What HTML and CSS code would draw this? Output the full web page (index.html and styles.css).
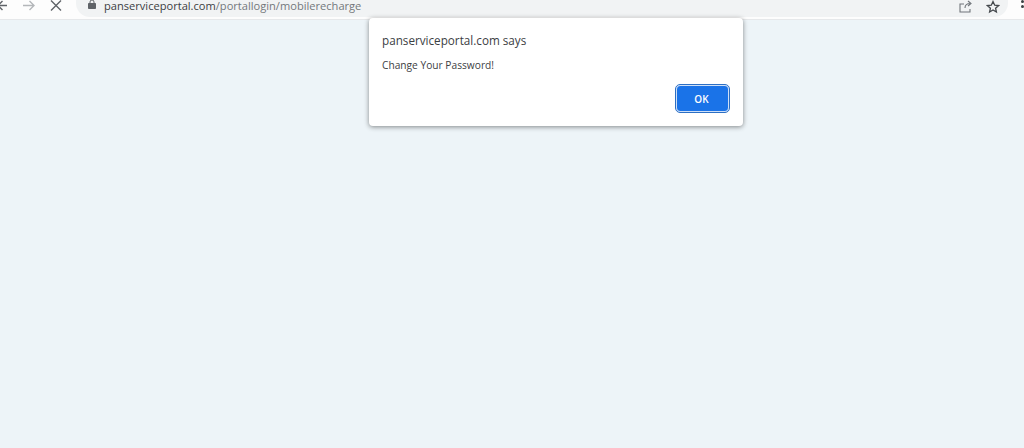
FILE: index.html
```html
<!DOCTYPE html>
<html lang="en">
<head>
  <meta charset="UTF-8" />
  <title>panserviceportal.com</title>
  <link rel="stylesheet" href="styles.css">
</head>
<body>

<div class="toolbar">
  <div class="nav">
    <svg class="icon back" width="14" height="14" viewBox="0 0 14 14"><path d="M10 5.500H1M5.500 1L1 5.500 5.500 10" /></svg>
    <svg class="icon forward" width="14" height="14" viewBox="0 0 14 14"><path d="M1 5.500h11M7.500 1L12 5.500 7.500 10" /></svg>
    <svg class="icon stop" width="14" height="14" viewBox="0 0 14 14"><path d="M2 0.500l10 10M12 0.500l-10 10" /></svg>
  </div>
  <div class="omnibox">
    <svg class="lock" width="10" height="11" viewBox="0 0 10 11"><path d="M1.500 3.500h7v5h-7z" /><path class="shackle" d="M3 3.500V2a2 2 0 0 1 4 0v1.500" /></svg>
    <span class="url"><span class="host">panserviceportal.com</span>/portallogin/mobilerecharge</span>
    <div class="actions">
      <svg class="icon share" width="16" height="14" viewBox="0 0 16 14"><path d="M6 4H2v8h10V9M7 8c0-3 2-4.500 5-4.500M10 1l3 2.500L10 6" /></svg>
      <svg class="icon star" width="14" height="14" viewBox="0 0 14 14"><path d="M7 1.500l1.700 3.700 3.800.4-2.900 2.600.8 3.800L7 10l-3.400 2 .8-3.800L1.500 5.600l3.800-.4z" /></svg>
    </div>
  </div>
  <div class="menu">
    <span class="menu-dot"></span>
    <span class="menu-dot"></span>
  </div>
</div>

<div class="page"></div>

<div class="dialog">
  <div class="dialog-title">panserviceportal.com says</div>
  <div class="dialog-text">Change Your Password!</div>
  <div class="dialog-buttons">
    <button class="ok-btn">OK</button>
  </div>
</div>

</body>
</html>
```

FILE: styles.css
```css
* { box-sizing: border-box; }

html, body {
  height: 100%;
}

body {
  margin: 0;
  font-family: "Open Sans", "Noto Sans", sans-serif;
  background: #edf4f8;
  display: flex;
  flex-direction: column;
  overflow: hidden;
}

.toolbar {
  height: 20px;
  flex: none;
  background: #fdfdfd;
  border-bottom: 1px solid #e6e8ea;
  display: flex;
  align-items: flex-start;
  overflow: hidden;
}

.nav {
  width: 79px;
  flex: none;
  display: flex;
  gap: 11px;
  margin-left: -3px;
}

.icon {
  flex: none;
  fill: none;
  stroke: #5f6368;
  stroke-width: 1.4;
}

.icon.forward { stroke: #b4b7ba; }
.icon.stop { margin-left: 2px; }

.omnibox {
  flex: 1;
  height: 17px;
  background: #f1f3f4;
  border-radius: 0 0 14px 14px;
  display: flex;
  align-items: flex-start;
  padding-left: 11px;
}

.lock {
  flex: none;
  margin-right: 7px;
  fill: #5f6368;
  stroke: #5f6368;
  stroke-width: 1;
}

.lock .shackle { fill: none; }

.url {
  font-size: 11.100px;
  line-height: 11px;
  color: #74787c;
  white-space: nowrap;
}

.host { color: #3c4043; }

.actions {
  margin-left: auto;
  display: flex;
  gap: 12px;
  padding-right: 8px;
}

.icon.share { stroke: #70757a; stroke-width: 1.1; }
.icon.star { stroke: #44484c; stroke-width: 1.3; }

.menu {
  flex: 1;
  max-width: 16px;
  padding-left: 13px;
}

.menu-dot {
  display: block;
  width: 3px;
  height: 3px;
  border-radius: 50%;
  background: #3c4043;
  margin-bottom: 2px;
}

.page {
  flex: 1;
}

.dialog {
  position: absolute;
  left: 369px;
  top: 18px;
  width: 374px;
  height: 108px;
  background: #fff;
  border-radius: 4px;
  box-shadow: 0 1px 5px rgba(0, 0, 0, 0.45);
  padding: 14px 14px 14px 13px;
  display: flex;
  flex-direction: column;
  color: #3c4043;
}

.dialog-title {
  font-size: 11.700px;
  line-height: 16px;
}

.dialog-text {
  font-size: 10.200px;
  line-height: 14px;
  margin-top: 10px;
}

.dialog-buttons {
  margin-top: auto;
  display: flex;
  justify-content: flex-end;
}

.ok-btn {
  width: 53px;
  height: 27px;
  background: #1a73e8;
  color: white;
  border: 1px solid #cfe0f7;
  outline: 1px solid #2c6fc4;
  border-radius: 4px;
  font-family: inherit;
  font-size: 10px;
  font-weight: 600;
  padding: 0 2px 0 0;
}
```
